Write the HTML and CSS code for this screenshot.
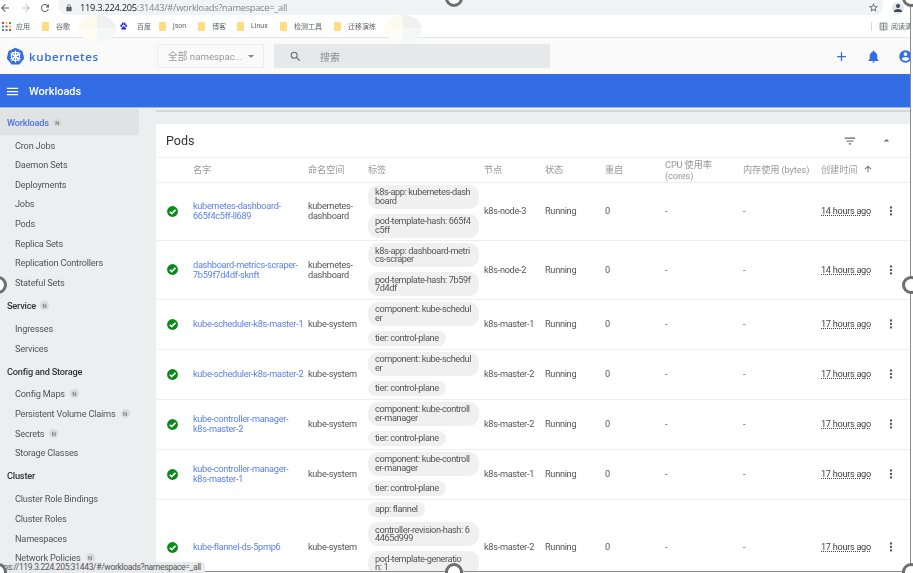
FILE: index.html
```html
<!DOCTYPE html>
<html lang="zh">
<head>
<meta charset="utf-8">
<title>Workloads - Kubernetes Dashboard</title>
<link rel="stylesheet" href="styles.css">
</head>
<body>
<div class="frame">
  <div class="browser-bar">
    <svg class="tb-icon back" viewBox="0 0 24 24"><path d="M20 11H7.8l5.6-5.6L12 4l-8 8 8 8 1.4-1.4L7.8 13H20z"/></svg>
    <svg class="tb-icon fwd" viewBox="0 0 24 24"><path d="M12 4l-1.4 1.4 5.6 5.6H4v2h12.2l-5.6 5.6L12 20l8-8z"/></svg>
    <svg class="tb-icon reload" viewBox="0 0 24 24"><path d="M17.65 6.35A8 8 0 1 0 19.73 14h-2.08A6 6 0 1 1 12 6c1.66 0 3.14.69 4.22 1.78L13 11h7V4z"/></svg>
    <div class="url-pill">
      <svg class="lock" viewBox="0 0 24 24"><path d="M18 8h-1V6A5 5 0 0 0 7 6v2H6a2 2 0 0 0-2 2v10c0 1.1.9 2 2 2h12a2 2 0 0 0 2-2V10a2 2 0 0 0-2-2zM9 6a3 3 0 0 1 6 0v2H9z"/></svg>
      <span class="url"><b>119.3.224.205</b>:31443/#/workloads?namespace=_all</span>
      <svg class="star" viewBox="0 0 24 24"><path d="M22 9.24l-7.19-.62L12 2 9.19 8.63 2 9.24l5.46 4.73L5.82 21 12 17.27 18.18 21l-1.63-7.03zM12 15.4l-3.76 2.27 1-4.28-3.32-2.88 4.38-.38L12 6.1l1.71 4.04 4.38.38-3.32 2.88 1 4.28z"/></svg>
    </div>
    <div class="avatar"><svg viewBox="0 0 24 24"><path d="M12 12a4 4 0 1 0 0-8 4 4 0 0 0 0 8zm0 2c-2.67 0-8 1.34-8 4v2h16v-2c0-2.66-5.33-4-8-4z"/></svg></div>
  </div>

  <div class="bookmarks">
    <span class="bm"><svg class="apps" viewBox="0 0 9 9"><rect width="2" height="2" fill="#e53935"/><rect x="3.5" width="2" height="2" fill="#fbc02d"/><rect x="7" width="2" height="2" fill="#43a047"/><rect y="3.5" width="2" height="2" fill="#1e88e5"/><rect x="3.5" y="3.5" width="2" height="2" fill="#e53935"/><rect x="7" y="3.5" width="2" height="2" fill="#fbc02d"/><rect y="7" width="2" height="2" fill="#43a047"/><rect x="3.5" y="7" width="2" height="2" fill="#1e88e5"/><rect x="7" y="7" width="2" height="2" fill="#e53935"/></svg>应用</span>
    <span class="bm"><i class="folder"></i>谷歌</span>
    <span class="blob"></span>
    <span class="bm"><svg class="paw" viewBox="0 0 24 24"><ellipse cx="6" cy="10" rx="2.6" ry="3.4"/><ellipse cx="10" cy="5" rx="2.6" ry="3.4"/><ellipse cx="15" cy="5" rx="2.6" ry="3.4"/><ellipse cx="19" cy="10" rx="2.6" ry="3.4"/><path d="M12.5 11c-3 0-3.500 3-5.500 4.500-2 1.800-1 5 2 5 1.500 0 2.200-.5 3.500-.5s2 .5 3.500.5c3 0 4-3.200 2-5-2-1.500-2.500-4.500-5.500-4.500z"/></svg>百度</span>
    <span class="bm"><i class="folder"></i>json</span>
    <span class="bm"><i class="folder"></i>博客</span>
    <span class="bm"><i class="folder"></i>Linux</span>
    <span class="bm"><i class="folder"></i>检测工具</span>
    <span class="bm"><i class="folder"></i>迁移演练</span>
    <span class="blob"></span>
    <span class="bm reader"><svg class="book" viewBox="0 0 12 12"><path d="M1.500 1.500h9v9h-9zM6 1.500v9M3 4h1.600M3 6h1.600M3 8h1.600M7.400 4H9M7.400 6H9M7.400 8H9"/></svg>阅读清单</span>
  </div>

  <header class="k-header">
    <div class="brand">
      <svg class="logo" viewBox="0 0 24 24"><path class="hept" d="M12 .8l8.800 4.200 2.200 9.500-6.100 7.700H7.100L1 14.500 3.200 5z"/><g class="wheel"><circle cx="12" cy="12" r="5.200"/><path d="M12 4.500v15M5.500 8.500l13 7M18.500 8.500l-13 7M7 18l10-12M17 18L7 6"/></g></svg>
      <span class="brand-name">kubernetes</span>
    </div>
    <div class="ns-select"><span>全部 namespac...</span><i class="caret"></i></div>
    <div class="search">
      <svg viewBox="0 0 24 24"><path d="M15.500 14h-.79l-.28-.27A6.470 6.470 0 0 0 16 9.500 6.500 6.500 0 1 0 9.500 16c1.610 0 3.090-.59 4.230-1.570l.27.28v.79l5 4.990L20.490 19zm-6 0C7.010 14 5 11.990 5 9.500S7.010 5 9.500 5 14 7.010 14 9.500 11.990 14 9.500 14z"/></svg>
      <span>搜索</span>
    </div>
    <div class="actions">
      <svg class="plus" viewBox="0 0 24 24"><path d="M19 13h-6v6h-2v-6H5v-2h6V5h2v6h6z"/></svg>
      <svg class="bell" viewBox="0 0 24 24"><path d="M12 22a2 2 0 0 0 2-2h-4a2 2 0 0 0 2 2zm6-6v-5c0-3.070-1.640-5.640-4.500-6.320V4a1.500 1.500 0 0 0-3 0v.68C7.630 5.360 6 7.920 6 11v5l-2 2v1h16v-1z"/></svg>
      <svg class="user" viewBox="0 0 24 24"><path d="M12 2a10 10 0 1 0 0 20 10 10 0 0 0 0-20zm0 3a3 3 0 1 1 0 6 3 3 0 0 1 0-6zm0 14.200a7.200 7.200 0 0 1-6-3.220c.03-1.990 4-3.080 6-3.080s5.970 1.090 6 3.080a7.200 7.200 0 0 1-6 3.220z"/></svg>
    </div>
  </header>

  <div class="toolbar">
    <svg viewBox="0 0 24 24"><path d="M3 18h18v-2H3zm0-5h18v-2H3zm0-7v2h18V6z"/></svg>
    <span>Workloads</span>
  </div>

  <div class="body">
    <nav class="side">
      <div class="sec active"><span>Workloads</span><em>N</em></div>
      <div class="item">Cron Jobs</div>
      <div class="item">Daemon Sets</div>
      <div class="item">Deployments</div>
      <div class="item">Jobs</div>
      <div class="item">Pods</div>
      <div class="item">Replica Sets</div>
      <div class="item">Replication Controllers</div>
      <div class="item">Stateful Sets</div>
      <div class="sec"><span>Service</span><em>N</em></div>
      <div class="item">Ingresses</div>
      <div class="item">Services</div>
      <div class="sec"><span>Config and Storage</span></div>
      <div class="item">Config Maps<em>N</em></div>
      <div class="item">Persistent Volume Claims<em>N</em></div>
      <div class="item">Secrets<em>N</em></div>
      <div class="item">Storage Classes</div>
      <div class="sec"><span>Cluster</span></div>
      <div class="item">Cluster Role Bindings</div>
      <div class="item">Cluster Roles</div>
      <div class="item">Namespaces</div>
      <div class="item">Network Policies<em>N</em></div>
    </nav>

    <main class="content">
      <div class="strip"></div>
      <section class="card">
        <div class="card-head">
          <h2>Pods</h2>
          <svg class="filter" viewBox="0 0 24 24"><path d="M10 18h4v-2h-4zM3 6v2h18V6zm3 7h12v-2H6z"/></svg>
          <svg class="collapse" viewBox="0 0 24 24"><path d="M7 14l5-5 5 5z"/></svg>
        </div>
        <table class="pods">
          <colgroup>
            <col class="c-icon"><col class="c-name"><col class="c-ns"><col class="c-labels"><col class="c-node"><col class="c-status"><col class="c-restart"><col class="c-cpu"><col class="c-mem"><col class="c-age"><col class="c-menu">
          </colgroup>
          <thead>
            <tr><th></th><th>名字</th><th>命名空间</th><th>标签</th><th>节点</th><th>状态</th><th>重启</th><th>CPU 使用率<br>(cores)</th><th>内存使用 (bytes)</th><th>创建时间<svg class="sort" viewBox="0 0 24 24"><path d="M4 12l1.410 1.410L11 7.830V20h2V7.830l5.580 5.590L20 12l-8-8z"/></svg></th><th></th></tr>
          </thead>
          <tbody>
            <tr>
              <td><svg class="ok" viewBox="0 0 24 24"><circle cx="12" cy="12" r="10"/><path class="tick" d="M7 12.500l3.500 3.500L17.500 9"/></svg></td>
              <td><a class="link">kubernetes-dashboard-665f4c5ff-ll689</a></td>
              <td>kubernetes-dashboard</td>
              <td><div class="chips"><span class="chip">k8s-app: kubernetes-dash<br>board</span><span class="chip">pod-template-hash: 665f4<br>c5ff</span></div></td>
              <td>k8s-node-3</td><td>Running</td><td>0</td><td>-</td><td>-</td><td><span class="age">14 hours ago</span></td>
              <td><svg class="more" viewBox="0 0 24 24"><path d="M12 8a2 2 0 1 0 0-4 2 2 0 0 0 0 4zm0 2a2 2 0 1 0 0 4 2 2 0 0 0 0-4zm0 6a2 2 0 1 0 0 4 2 2 0 0 0 0-4z"/></svg></td>
            </tr>
            <tr>
              <td><svg class="ok" viewBox="0 0 24 24"><circle cx="12" cy="12" r="10"/><path class="tick" d="M7 12.500l3.500 3.500L17.500 9"/></svg></td>
              <td><a class="link">dashboard-metrics-scraper-7b59f7d4df-sknft</a></td>
              <td>kubernetes-dashboard</td>
              <td><div class="chips"><span class="chip">k8s-app: dashboard-metri<br>cs-scraper</span><span class="chip">pod-template-hash: 7b59f<br>7d4df</span></div></td>
              <td>k8s-node-2</td><td>Running</td><td>0</td><td>-</td><td>-</td><td><span class="age">14 hours ago</span></td>
              <td><svg class="more" viewBox="0 0 24 24"><path d="M12 8a2 2 0 1 0 0-4 2 2 0 0 0 0 4zm0 2a2 2 0 1 0 0 4 2 2 0 0 0 0-4zm0 6a2 2 0 1 0 0 4 2 2 0 0 0 0-4z"/></svg></td>
            </tr>
            <tr>
              <td><svg class="ok" viewBox="0 0 24 24"><circle cx="12" cy="12" r="10"/><path class="tick" d="M7 12.500l3.500 3.500L17.500 9"/></svg></td>
              <td><a class="link">kube-scheduler-k8s-master-1</a></td>
              <td>kube-system</td>
              <td><div class="chips"><span class="chip">component: kube-schedul<br>er</span><span class="chip">tier: control-plane</span></div></td>
              <td>k8s-master-1</td><td>Running</td><td>0</td><td>-</td><td>-</td><td><span class="age">17 hours ago</span></td>
              <td><svg class="more" viewBox="0 0 24 24"><path d="M12 8a2 2 0 1 0 0-4 2 2 0 0 0 0 4zm0 2a2 2 0 1 0 0 4 2 2 0 0 0 0-4zm0 6a2 2 0 1 0 0 4 2 2 0 0 0 0-4z"/></svg></td>
            </tr>
            <tr>
              <td><svg class="ok" viewBox="0 0 24 24"><circle cx="12" cy="12" r="10"/><path class="tick" d="M7 12.500l3.500 3.500L17.500 9"/></svg></td>
              <td><a class="link">kube-scheduler-k8s-master-2</a></td>
              <td>kube-system</td>
              <td><div class="chips"><span class="chip">component: kube-schedul<br>er</span><span class="chip">tier: control-plane</span></div></td>
              <td>k8s-master-2</td><td>Running</td><td>0</td><td>-</td><td>-</td><td><span class="age">17 hours ago</span></td>
              <td><svg class="more" viewBox="0 0 24 24"><path d="M12 8a2 2 0 1 0 0-4 2 2 0 0 0 0 4zm0 2a2 2 0 1 0 0 4 2 2 0 0 0 0-4zm0 6a2 2 0 1 0 0 4 2 2 0 0 0 0-4z"/></svg></td>
            </tr>
            <tr>
              <td><svg class="ok" viewBox="0 0 24 24"><circle cx="12" cy="12" r="10"/><path class="tick" d="M7 12.500l3.500 3.500L17.500 9"/></svg></td>
              <td><a class="link">kube-controller-manager-k8s-master-2</a></td>
              <td>kube-system</td>
              <td><div class="chips"><span class="chip">component: kube-controll<br>er-manager</span><span class="chip">tier: control-plane</span></div></td>
              <td>k8s-master-2</td><td>Running</td><td>0</td><td>-</td><td>-</td><td><span class="age">17 hours ago</span></td>
              <td><svg class="more" viewBox="0 0 24 24"><path d="M12 8a2 2 0 1 0 0-4 2 2 0 0 0 0 4zm0 2a2 2 0 1 0 0 4 2 2 0 0 0 0-4zm0 6a2 2 0 1 0 0 4 2 2 0 0 0 0-4z"/></svg></td>
            </tr>
            <tr>
              <td><svg class="ok" viewBox="0 0 24 24"><circle cx="12" cy="12" r="10"/><path class="tick" d="M7 12.500l3.500 3.500L17.500 9"/></svg></td>
              <td><a class="link">kube-controller-manager-k8s-master-1</a></td>
              <td>kube-system</td>
              <td><div class="chips"><span class="chip">component: kube-controll<br>er-manager</span><span class="chip">tier: control-plane</span></div></td>
              <td>k8s-master-1</td><td>Running</td><td>0</td><td>-</td><td>-</td><td><span class="age">17 hours ago</span></td>
              <td><svg class="more" viewBox="0 0 24 24"><path d="M12 8a2 2 0 1 0 0-4 2 2 0 0 0 0 4zm0 2a2 2 0 1 0 0 4 2 2 0 0 0 0-4zm0 6a2 2 0 1 0 0 4 2 2 0 0 0 0-4z"/></svg></td>
            </tr>
            <tr>
              <td><svg class="ok" viewBox="0 0 24 24"><circle cx="12" cy="12" r="10"/><path class="tick" d="M7 12.500l3.500 3.500L17.500 9"/></svg></td>
              <td><a class="link">kube-flannel-ds-5pmp6</a></td>
              <td>kube-system</td>
              <td><div class="chips chips-tall"><span class="chip">app: flannel</span><span class="chip">controller-revision-hash: 6<br>4465d999</span><span class="chip">pod-template-generatio<br>n: 1</span></div></td>
              <td>k8s-master-2</td><td>Running</td><td>0</td><td>-</td><td>-</td><td><span class="age">17 hours ago</span></td>
              <td><svg class="more" viewBox="0 0 24 24"><path d="M12 8a2 2 0 1 0 0-4 2 2 0 0 0 0 4zm0 2a2 2 0 1 0 0 4 2 2 0 0 0 0-4zm0 6a2 2 0 1 0 0 4 2 2 0 0 0 0-4z"/></svg></td>
            </tr>
          </tbody>
        </table>
      </section>
    </main>
  </div>
</div>

<div class="status-tip"><span>https://119.3.224.205:31443/#/workloads?namespace=_all</span></div>
<i class="handle h-top"></i>
<i class="handle h-left"></i>
<i class="handle h-right"></i>
<i class="handle h-bottom"></i>
<i class="handle h-tr"></i>
<i class="handle h-bl"></i>
<i class="handle h-br"></i>
</body>
</html>
```

FILE: styles.css
```css
* { box-sizing: border-box; }
html, body { margin: 0; height: 573px; overflow: hidden; background: #fff; }
body {
  position: relative;
  font-family: Roboto, "Noto Sans CJK SC", sans-serif;
  font-size: 9.5px;
  color: #444;
}
.frame {
  width: 911px;
  height: 572px;
  border-right: 1px solid #8d8d8d;
  border-bottom: 1px solid #8d8d8d;
  display: flex;
  flex-direction: column;
  overflow: hidden;
  filter: blur(0.3px);
}

/* browser chrome */
.browser-bar { height: 15px; display: flex; align-items: center; flex: none; }
.tb-icon { width: 12px; height: 12px; fill: #5f6368; flex: none; }
.back { margin-left: -1px; }
.fwd { margin-left: 9px; fill: #bdc1c6; }
.reload { margin-left: 7px; }
.url-pill {
  margin-left: 8px; width: 824px; height: 15px; flex: none;
  background: #f1f3f4; border-radius: 0 0 8px 8px;
  display: flex; align-items: center; padding: 0 4.500px 0 6px;
}
.lock { width: 8px; height: 8px; fill: #5f6368; flex: none; }
.url { margin-left: 7px; flex: 1; font-family: "Open Sans", Roboto, sans-serif; font-size: 9.3px; letter-spacing: -.28px; color: #80868b; }
.url b { font-weight: 400; color: #202124; }
.star { width: 11px; height: 11px; fill: #5f6368; flex: none; }
.avatar { margin-left: 9px; width: 12px; height: 12px; border-radius: 50%; background: #e3e5e8; display: flex; flex: none; }
.avatar svg { width: 12px; height: 12px; fill: #3c4a5a; }

.bookmarks {
  height: 23px; flex: none; padding-left: 2px;
  display: grid;
  grid-template-columns: 40px 36px 41px 40px 39px 39px 43px 54px 50px 487px 42px;
  grid-template-rows: 22px;
  align-items: center;
  position: relative; z-index: 1;
  border-bottom: 1px solid #e4e4e4;
  font-size: 7px; color: #5f6368;
}
.bm { display: flex; align-items: center; gap: 5px; white-space: nowrap; }
.bm .folder { margin-right: 2px; }
.apps { width: 9px; height: 9px; flex: none; }
.folder { width: 7px; height: 9px; background: #fddc82; border-radius: 1px; flex: none; }
.paw { width: 9px; height: 9px; fill: #2932e1; flex: none; margin-right: 4px; }
.blob {
  width: 38px; height: 27px; margin-top: 5px; border-radius: 50%;
  background: conic-gradient(#eff0f0 0 25%, #f5f6f6 25% 50%, #fdfdf6 50% 75%, #fdfbee 75% 100%);
}
.reader { border-left: 1px solid #d8d8d8; padding-left: 7px; height: 9px; gap: 3px; }
.book { width: 9px; height: 9px; fill: none; stroke: #5f6368; stroke-width: 1; flex: none; }

/* dashboard header */
.k-header {
  height: 36px; flex: none; background: #fafafa;
  display: flex; align-items: center; padding-left: 6px;
}
.brand { width: 151px; flex: none; display: flex; align-items: center; gap: 4px; }
.logo { width: 19px; height: 19px; flex: none; }
.hept { fill: #326de6; }
.wheel { fill: none; stroke: #fff; stroke-width: 1.400; }
.brand-name { font-family: "Open Sans", Roboto, sans-serif; font-weight: 600; font-size: 11.5px; letter-spacing: .65px; color: #326de6; }
.ns-select {
  width: 107px; height: 24px; flex: none; background: #fafafa; border: 1px solid #eeeeee;
  display: flex; align-items: center; padding: 0 10px; font-size: 9.7px; color: #999;
  gap: 6px; white-space: nowrap;
}
.caret { border: 3px solid transparent; border-top: 3.500px solid #888; border-bottom: 0; flex: none; }
.search {
  margin-left: 10px; width: 276px; height: 24px; flex: none; background: #e6e8e9;
  display: flex; align-items: center; padding-left: 15px; gap: 18px; font-size: 10px; color: #8c8c8c;
}
.search svg { width: 13px; height: 13px; fill: #666; flex: none; }
.actions { margin-left: 283.500px; display: flex; align-items: center; gap: 17px; flex: none; }
.actions svg { width: 15px; height: 15px; fill: #326de6; flex: none; }

.toolbar {
  height: 34px; flex: none; background: #326de6; color: #fff;
  display: flex; align-items: center; padding: 1px 0 0 5px; gap: 9px;
  font-size: 11px; font-weight: 500;
  border-bottom: 1px solid #9fb6e6;
}
.toolbar svg { width: 15px; height: 15px; fill: #fff; }

/* body */
.body { flex: 1; display: flex; min-height: 0; background: #eceef0; }
.side { width: 156px; flex: none; padding-top: 1px; background: #eceef0; font-size: 9.2px; letter-spacing: -.2px; color: #555; overflow: hidden; }
.sec {
  height: 26.200px; width: 139px; display: flex; align-items: center; gap: 4px;
  padding-left: 7px; font-weight: 500; color: #333;
}
.sec.active { background: #e1e2e3; color: #4a72e8; }
.item { height: 19.670px; display: flex; align-items: center; padding-left: 15px; white-space: nowrap; }
.side em {
  width: 9px; height: 9px; border-radius: 50%; background: #d8dadc; color: #777;
  font-size: 6px; font-style: normal; font-weight: 500;
  display: flex; align-items: center; justify-content: center; flex: none;
}
.item em { margin-left: 5px; }

.content { flex: 1; min-width: 0; overflow: hidden; }
.strip { height: 2px; margin-top: 2px; background: #d6d8da; }
.card { margin-top: 12px; background: #fff; border-radius: 2px; }
.card-head { height: 34px; display: flex; align-items: center; padding: 0 17px 0 10px; border-bottom: 1px solid #eee; }
.card-head h2 { margin: 0; flex: 1; font-size: 12.5px; font-weight: 400; color: #333; }
.filter { width: 14px; height: 14px; fill: #666; flex: none; }
.collapse { width: 13px; height: 13px; fill: #666; margin-left: 23px; flex: none; }

.pods { width: 754px; border-collapse: collapse; table-layout: fixed; }
.c-icon { width: 37px; } .c-name { width: 115px; } .c-ns { width: 60px; }
.c-labels { width: 116px; } .c-node { width: 61px; } .c-status { width: 60px; }
.c-restart { width: 60px; } .c-cpu { width: 78px; } .c-mem { width: 78px; }
.c-age { width: 60px; } .c-menu { width: 29px; }
.pods th {
  height: 24px; padding: 0; font-size: 9.2px; font-weight: 400; color: #999; text-align: left;
  line-height: 11px; letter-spacing: -.1px; white-space: nowrap; border-bottom: 1px solid #eee;
}
.pods td { padding: 0; line-height: 10px; font-size: 9.2px; letter-spacing: -.3px; color: #555; border-bottom: 1px solid #eee; vertical-align: middle; }
.pods td:first-child { padding-left: 9.500px; }
.pods td:nth-child(2) { padding-right: 4px; }
.sort { width: 10px; height: 10px; fill: #555; margin-left: 6px; vertical-align: -1px; }
.ok { display: block; width: 13px; height: 13px; fill: #0a8a1a; }
.tick { fill: none; stroke: #fff; stroke-width: 3; }
.link { color: #5b80ea; }
.age { text-decoration: underline dotted; white-space: nowrap; color: #444; }
.more { display: block; width: 14px; height: 14px; fill: #555; margin-left: 3px; }
.chips { display: flex; flex-direction: column; align-items: flex-start; gap: 5px; padding: 2.250px 0; }
.chips-tall { padding-bottom: 20px; }
.chip {
  padding: 3.500px 7px; background: #f0f0f0; border-radius: 10px;
  font-size: 9.2px; line-height: 8.500px; letter-spacing: -.4px; color: #555; white-space: nowrap;
}
.chip:has(br) { width: 111px; }

/* overlays */
.status-tip {
  position: absolute; left: 0; bottom: 0; width: 205px; height: 11px;
  background: #e8eaed; border-top-right-radius: 4px; overflow: hidden;
  font-size: 8.500px; letter-spacing: -.33px; line-height: 11px; color: #555; white-space: nowrap;
}
.status-tip span { display: block; margin-left: -6px; }
.handle {
  position: absolute; width: 18px; height: 18px; border-radius: 50%;
  background: #fff; border: 3px solid #6e6e6e;
}
.h-top { left: 445px; top: -11px; }
.h-bottom { left: 445px; bottom: -8px; }
.h-left { left: -11px; top: 276px; }
.h-right { left: 902px; top: 276px; }
.h-tr { left: 902px; top: -11px; }
.h-bl { left: -11px; bottom: -8px; }
.h-br { left: 902px; bottom: -8px; }
```
